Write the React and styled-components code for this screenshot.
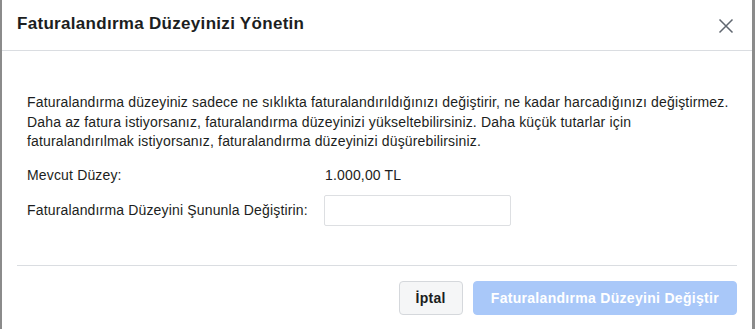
import styled, { createGlobalStyle } from "styled-components";

const GlobalStyle = createGlobalStyle`
  html, body {
    margin: 0;
    padding: 0;
    background: #8b8b8b;
    font-family: "Liberation Sans", Arial, sans-serif;
  }
`;

const Page = styled.div`
  display: flex;
  height: 329px;
  padding-left: 2px;
  overflow: hidden;
`;

const Dialog = styled.div`
  width: 750px;
  height: 329px;
  background: #fff;
  display: flex;
  flex-direction: column;
  color: #1c1e21;
`;

const Header = styled.div`
  height: 48px;
  border-bottom: 1px solid #dadde1;
  display: flex;
  align-items: center;
  justify-content: space-between;
  padding: 0 16px 2px 15px;
`;

const Title = styled.h2`
  margin: 0;
  font-size: 17px;
  letter-spacing: 0.3px;
  font-weight: bold;
  color: #1c1e21;
`;

const Close = styled.button`
  border: 0;
  background: none;
  padding: 0;
  width: 20px;
  height: 20px;
  display: flex;
  align-items: center;
  justify-content: center;
  cursor: pointer;
  margin-top: 4px;
`;

const Body = styled.div`
  padding: 42px 23px 0 25px;
  font-size: 14px;
  letter-spacing: 0.16px;
  line-height: 19.5px;
`;

const Text = styled.p`
  margin: 0 0 14px;
`;

const Row = styled.div`
  display: grid;
  grid-template-columns: 298px 1fr;
  align-items: center;
  margin-bottom: ${(p) => p.$gap || 0}px;
`;

const Label = styled.span`
  color: #1c1e21;
`;

const Input = styled.input`
  width: 187px;
  height: 31px;
  box-sizing: border-box;
  border: 1px solid #dddfe2;
  border-radius: 2px;
  margin-left: -1px;
  font: inherit;
`;

const Divider = styled.div`
  margin: 39px 15px 0;
  border-top: 1px solid #dadde1;
`;

const Footer = styled.div`
  display: flex;
  justify-content: flex-end;
  gap: 10px;
  padding: 15px 15px 0;
`;

const Button = styled.button`
  height: 34px;
  box-sizing: border-box;
  padding: 0 ${(p) => (p.$primary ? 17 : 16)}px;
  border-radius: 4px;
  font-family: "Liberation Sans", Arial, sans-serif;
  font-size: 14px;
  letter-spacing: 0.3px;
  font-weight: bold;
  border: 1px solid ${(p) => (p.$primary ? "#a9c8f9" : "#d5d8dc")};
  background: ${(p) => (p.$primary ? "#a9c8f9" : "#f5f6f7")};
  color: ${(p) => (p.$primary ? "#fff" : "#1c1e21")};
`;

export default function App() {
  return (
    <>
      <GlobalStyle />
      <Page>
        <Dialog>
          <Header>
            <Title>Faturalandırma Düzeyinizi Yönetin</Title>
            <Close aria-label="Kapat">
              <svg width="16" height="16" viewBox="0 0 16 16">
                <path d="M1.5 1.5 L14.5 14.5 M14.5 1.5 L1.5 14.5" stroke="#606770" strokeWidth="1.5" />
              </svg>
            </Close>
          </Header>
          <Body>
            <Text>
              Faturalandırma düzeyiniz sadece ne sıklıkta faturalandırıldığınızı değiştirir, ne kadar harcadığınızı değiştirmez. Daha az fatura istiyorsanız, faturalandırma düzeyinizi yükseltebilirsiniz. Daha küçük tutarlar için faturalandırılmak istiyorsanız, faturalandırma düzeyinizi düşürebilirsiniz.
            </Text>
            <Row $gap={10}>
              <Label>Mevcut Düzey:</Label>
              <span>1.000,00 TL</span>
            </Row>
            <Row>
              <Label>Faturalandırma Düzeyini Şununla Değiştirin:</Label>
              <Input type="text" />
            </Row>
          </Body>
          <Divider />
          <Footer>
            <Button>İptal</Button>
            <Button $primary>Faturalandırma Düzeyini Değiştir</Button>
          </Footer>
        </Dialog>
      </Page>
    </>
  );
}
